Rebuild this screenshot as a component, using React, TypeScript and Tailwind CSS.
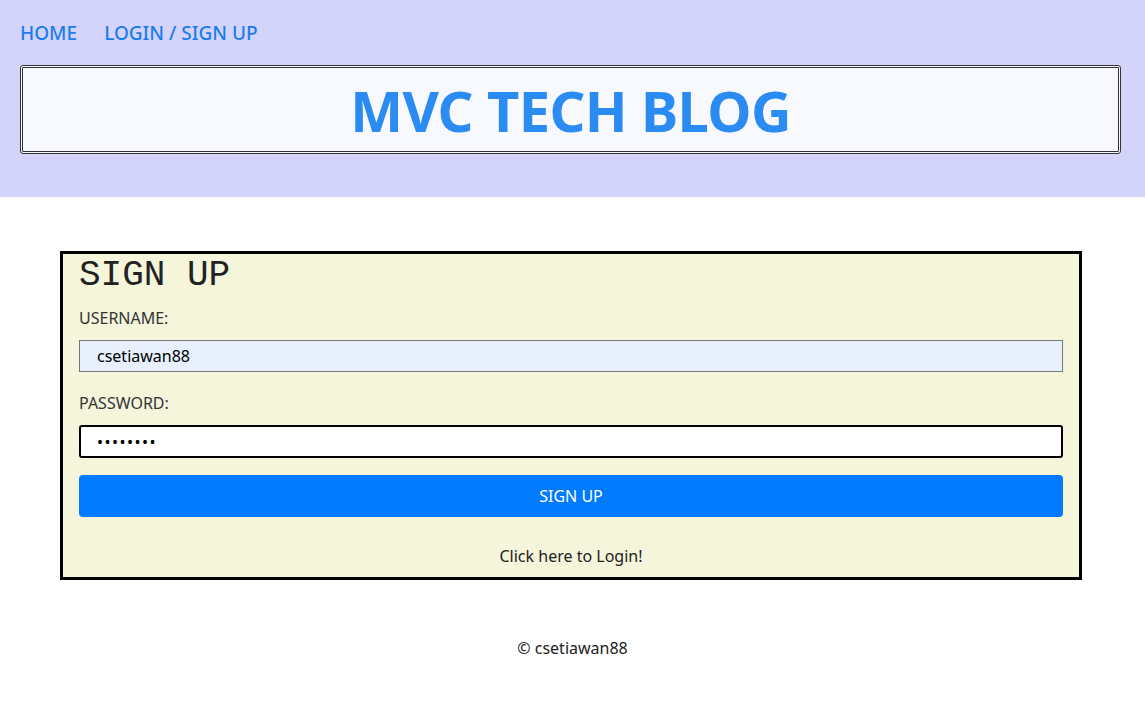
import React from 'react';

const sans = { fontFamily: '"Noto Sans", "Open Sans", sans-serif' };

export default function App() {
  return (
    <div className="min-h-screen bg-white" style={sans}>
      {/* Header */}
      <header className="bg-[#d4d4fb] pl-5 pr-6 pt-[19px] pb-[43px]">
        <nav className="flex gap-[27px] text-[19px] font-medium leading-[28px] text-[#1a7cf0] h-[28px]">
          <a href="#">HOME</a>
          <a href="#">LOGIN / SIGN UP</a>
        </nav>
        <div className="mt-[18px] h-[89px] rounded-[3px] border-[3px] border-double border-[#333] bg-[#f8f8ff] flex items-center justify-center">
          <h1 className="text-[56px] font-bold leading-none tracking-[-0.6px] text-[#2a8bf2]">MVC TECH BLOG</h1>
        </div>
      </header>

      {/* Sign up card */}
      <main className="pt-[54px]">
        <div className="ml-[60px] w-[1022px] border-[3px] border-black bg-[#f5f5dc] px-[16px]">
          <h2
            className="text-[36px] leading-[43px] text-[#222]"
            style={{ fontFamily: '"Liberation Mono", monospace' }}
          >
            SIGN UP
          </h2>
          <label className="mt-[9px] block text-[16px] leading-[24px] text-[#333]">USERNAME:</label>
          <input
            className="mt-[10px] block h-[32px] w-full border border-[#767676] bg-[#e8f0fe] pl-[17px] text-[16px] text-black outline-none"
            defaultValue="csetiawan88"
          />
          <label className="mt-[19px] block text-[16px] leading-[24px] text-[#333]">PASSWORD:</label>
          <input
            type="password"
            className="mt-[10px] block h-[33px] w-full rounded-[3px] border-2 border-black bg-white pl-[16px] text-[16px] tracking-[1.5px] text-black outline-none"
            defaultValue="password"
          />
          <button className="mt-[17px] h-[42px] w-full rounded-[4px] bg-[#007bff] text-[16px] text-white">
            SIGN UP
          </button>
          <p className="mt-[27px] pb-[9px] text-center text-[16px] leading-[24px] text-[#222]">
            Click here to Login!
          </p>
        </div>
      </main>

      <footer className="mt-[56px] text-center text-[16px] leading-[24px] text-[#222]">© csetiawan88</footer>
    </div>
  );
}
